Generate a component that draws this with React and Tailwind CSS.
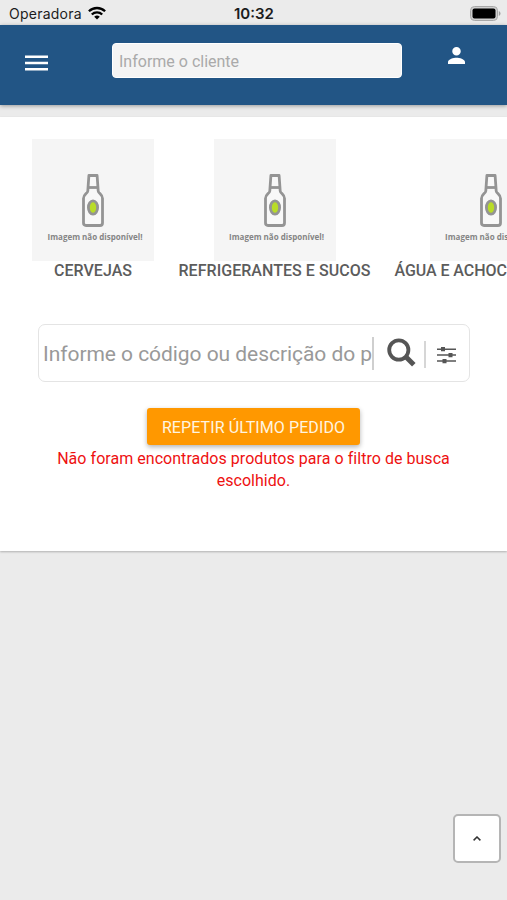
import React, { useState } from 'react';

const CATEGORIES = [
  { id: 1, name: 'CERVEJAS', width: 'w-[122px]', tracking: 'tracking-[0.05px]' },
  { id: 2, name: 'REFRIGERANTES E SUCOS', width: 'w-[193px]', tracking: 'tracking-[0.05px]' },
  { id: 3, name: 'ÁGUA E ACHOCOLATADOS', width: 'w-[191px]', tracking: 'tracking-[-0.06px]' },
];

function StatusBar() {
  return (
    <div className="h-[25px] pl-[9px] pr-[6px] grid grid-cols-3 items-center bg-[#ebebeb] text-[#1c1c1c] font-['Inter',sans-serif]">
      <div className="flex items-center gap-[6px] pt-[2px]">
        <span className="text-[14px] leading-4 tracking-[0.24px] whitespace-nowrap">Operadora</span>
        <svg width="18" height="14" viewBox="0 0 18 14" className="-mt-[2px]" fill="none" stroke="#000" strokeWidth="2.3">
          <path d="M0.9 5.3A11.6 11.6 0 0 1 17.1 5.3" />
          <path d="M3.8 8.5A7.4 7.4 0 0 1 14.2 8.5" />
          <path d="M9 13.6L6.2 10.8A4 4 0 0 1 11.8 10.8Z" fill="#000" stroke="none" />
        </svg>
      </div>
      <span className="-ml-[2px] text-center text-[15px] leading-4 font-semibold pt-[2px]">10:32</span>
      <svg width="31" height="15" viewBox="0 0 31 15" className="justify-self-end mt-[1px]">
        <rect x="0.5" y="0.5" width="27" height="14" rx="4" fill="#cfcfcf" stroke="#a8a8a8" />
        <rect x="2.5" y="2.5" width="23" height="10" rx="2" fill="#000" />
        <path d="M28.8 5v5c1-.4 1.7-1.3 1.7-2.5S29.8 5.4 28.8 5z" fill="#a0a0a0" />
      </svg>
    </div>
  );
}

function Header() {
  const [client, setClient] = useState('');

  return (
    <header className="relative h-20 pl-[25px] pr-[42px] flex items-start justify-between bg-[#225585] shadow-[0_1px_4px_rgba(0,0,0,0.35)]">
      <button className="mt-[30px]" aria-label="Menu">
        <svg width="23" height="16" viewBox="0 0 23 16" fill="#fff">
          <path d="M0 .5h23v2.6H0zM0 6.7h23v2.6H0zM0 12.9h23v2.6H0z" />
        </svg>
      </button>
      <input
        value={client}
        onChange={(e) => setClient(e.target.value)}
        placeholder="Informe o cliente"
        className="mt-[18px] ml-[18px] w-[290px] h-[35px] px-[6px] pt-[2px] rounded-[4px] bg-[#f4f4f4] border border-white text-base text-[#555] placeholder:text-[#aaa] outline-none"
      />
      <button className="mt-[22px]" aria-label="Perfil">
        <svg width="17" height="17" viewBox="4 4 16 16" fill="#fff">
          <path d="M12 12c2.21 0 4-1.79 4-4s-1.79-4-4-4-4 1.79-4 4 1.79 4 4 4zm0 2c-2.67 0-8 1.34-8 4v2h16v-2c0-2.66-5.33-4-8-4z" />
        </svg>
      </button>
    </header>
  );
}

function NoImage() {
  return (
    <div className="w-[122px] h-[122px] pt-[35px] flex flex-col items-center bg-[#f5f5f5]">
      <svg width="22" height="53" viewBox="0 0 22 53" fill="none" stroke="#949494" strokeWidth="2.8" strokeLinejoin="round">
        <path
          d="M6.9 1.5h8.2l1.1 15.5c.2 2.4 4.3 3.3 4.3 7.5v24.5q0 2.5-2.5 2.5H4q-2.5 0-2.5-2.5V24.5c0-4.2 4.1-5.1 4.3-7.5z"
          fill="#f8f8f8"
        />
        <path d="M6 13.5h10" />
        <ellipse cx="11" cy="33.5" rx="4.6" ry="6.7" fill="#b9dc28" />
      </svg>
      <span className="mt-[4px] ml-[4px] text-[8px] leading-[12px] font-bold text-[#858585] whitespace-nowrap font-['Open_Sans',sans-serif]">
        Imagem não disponível!
      </span>
    </div>
  );
}

function SearchBox() {
  const [query, setQuery] = useState('');

  return (
    <div className="mr-[37px] ml-[38px] mt-[43px] h-[58px] pl-[4px] flex items-center rounded-[7px] border border-[#e4e4e4]">
      <input
        value={query}
        onChange={(e) => setQuery(e.target.value)}
        placeholder="Informe o código ou descrição do produto"
        className="w-[329px] h-10 pt-[2px] text-[21px] tracking-[-0.05px] text-[#555] placeholder:text-[#999] outline-none"
      />
      <span className="w-[2px] h-[33px] bg-[#cfcfcf]" />
      <button className="ml-[13px] -mt-[2px]" aria-label="Buscar">
        <svg width="29" height="29" viewBox="0 0 29 29" fill="none" stroke="#555">
          <circle cx="11.8" cy="12" r="9.6" strokeWidth="3.8" />
          <path d="M18.8 18.8l8 8" strokeWidth="5" />
        </svg>
      </button>
      <span className="w-[2px] h-[27px] ml-[8px] mt-[2px] bg-[#d6d6d6]" />
      <button className="ml-[11px] mt-[4px]" aria-label="Filtros">
        <svg width="19" height="18" viewBox="0 0 19 18" fill="#555">
          <path d="M0 2.4h19v1.5H0zM0 8.3h19v1.5H0zM0 14.3h19v1.5H0z" />
          <path d="M4 1h4v4.3H4zM11.5 7h4v4.3h-4zM5.5 13h4v4.3h-4z" />
        </svg>
      </button>
    </div>
  );
}

export default function App() {
  return (
    <div className="relative w-full h-[900px] overflow-hidden bg-[#ebebeb] font-['Roboto',sans-serif]">
      <StatusBar />
      <Header />

      <main className="mt-[12px] h-[434px] overflow-hidden bg-white shadow-[0_1px_2px_rgba(0,0,0,0.25)]">
        {/* Categories */}
        <div className="pt-[22px] pl-[32px] flex gap-6 overflow-hidden">
          {CATEGORIES.map((category) => (
            <div key={category.id} className={`${category.width} shrink-0 flex flex-col items-center`}>
              <NoImage />
              <span className={`${category.tracking} text-base leading-[20px] font-medium text-[#5c5c5c] whitespace-nowrap`}>
                {category.name}
              </span>
            </div>
          ))}
        </div>

        <SearchBox />

        <div className="mt-[26px] flex flex-col items-center">
          <button className="w-[213px] h-[37px] pt-[2px] rounded-[3px] bg-[#ff9800] text-base tracking-[0.09px] text-[#fff5e0] whitespace-nowrap shadow-[0_2px_5px_rgba(0,0,0,0.3)]">
            REPETIR ÚLTIMO PEDIDO
          </button>
          <p className="mt-[3px] px-[50px] text-center text-base leading-[22px] tracking-[0.04px] text-[#ee1111]">
            Não foram encontrados produtos para o filtro de busca escolhido.
          </p>
        </div>
      </main>

      {/* Back to top */}
      <button
        className="absolute right-[6px] bottom-[37px] w-[48px] h-[49px] rounded-[5px] border-2 border-[#b5b5b5] bg-white flex items-center justify-center"
        aria-label="Voltar ao topo"
      >
        <svg width="8" height="5" viewBox="0 0 8 5" fill="none" stroke="#333" strokeWidth="1.5">
          <path d="M.6 4.4L4 1l3.4 3.4" />
        </svg>
      </button>
    </div>
  );
}
